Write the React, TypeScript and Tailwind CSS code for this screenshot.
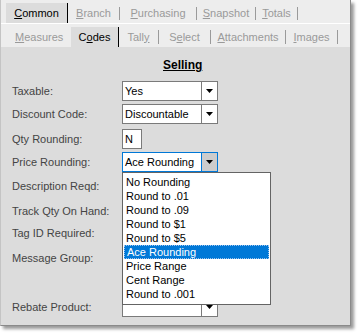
import React from "react";

const Arrow = () => (
  <svg width="7" height="4" viewBox="0 0 7 4">
    <path d="M0 0h7L3.5 4z" fill="#000" />
  </svg>
);

function Combo({ value, focused }: { value: string; focused?: boolean }) {
  return (
    <div
      className={`flex h-[20px] w-[96px] border bg-white ${
        focused ? "border-[#0078d7]" : "border-[#7a7a7a]"
      }`}
    >
      <div className="flex flex-1 items-center pl-[2px] text-black">{value}</div>
      <div
        className={`flex w-[16px] items-center justify-center border-l ${
          focused ? "border-[#0078d7] bg-[#cccccc]" : "border-[#7a7a7a] bg-white"
        }`}
      >
        <Arrow />
      </div>
    </div>
  );
}

function Tab({
  w,
  active,
  children,
  sepH,
}: {
  w: string;
  active?: boolean;
  children: React.ReactNode;
  sepH: string;
}) {
  return (
    <div className={`flex h-full items-stretch ${w} ${active ? "bg-[#dcdcdc]" : ""}`}>
      <div
        className={`flex flex-1 items-center justify-center ${
          active ? "text-black" : "text-[#9a9a9a]"
        }`}
      >
        {children}
      </div>
      {active ? (
        <div className="w-px bg-black" />
      ) : (
        <div className={`w-px self-center bg-[#9a9a9a] ${sepH}`} />
      )}
    </div>
  );
}

function Row({
  label,
  mt,
  children,
}: {
  label: string;
  mt: string;
  children?: React.ReactNode;
}) {
  return (
    <div className={`flex h-[20px] items-center ${mt}`}>
      <div className="w-[110px] text-[#444444]">{label}</div>
      {children}
    </div>
  );
}

const items = [
  "No Rounding",
  "Round to .01",
  "Round to .09",
  "Round to $1",
  "Round to $5",
  "Ace Rounding",
  "Price Range",
  "Cent Range",
  "Round to .001",
];

export default function App() {
  return (
    <div
      className="relative h-[335px] w-[358px] bg-white text-[11px] leading-none"
      style={{ fontFamily: '"Liberation Sans", Arial, sans-serif' }}
    >
      <div className="relative flex h-[326px] w-[351px] flex-col border-b border-l border-r border-b-[#8a8a8a] border-l-[#c4c4c4] border-r-[#8a8a8a] bg-[#dcdcdc] shadow-[3px_3px_3px_rgba(0,0,0,0.4)]">
        {/* Tab row 1 */}
        <div className="flex h-[24px] border-b border-white bg-[#ededed] pl-[5px] pt-[3px]">
          <Tab w="w-[62px]" active sepH="h-[13px]">
            <span>
              <u>C</u>ommon
            </span>
          </Tab>
          <Tab w="w-[52px]" sepH="h-[13px]">
            <span>
              <u>B</u>ranch
            </span>
          </Tab>
          <Tab w="w-[77px]" sepH="h-[13px]">
            <span>
              <u>P</u>urchasing
            </span>
          </Tab>
          <Tab w="w-[59px]" sepH="h-[13px]">
            <span>
              <u>S</u>napshot
            </span>
          </Tab>
          <Tab w="w-[42px]" sepH="h-[13px]">
            <span>
              <u>T</u>otals
            </span>
          </Tab>
        </div>
        {/* Tab row 2 */}
        <div className="flex h-[23px] bg-[#ededed] pl-[5px] pt-[3px]">
          <div className="flex h-full w-[65px] items-center pl-[9px] text-[#9a9a9a]">
            <span>
              <u>M</u>easures
            </span>
          </div>
          <Tab w="w-[48px]" active sepH="h-[14px]">
            <span>
              C<u>o</u>des
            </span>
          </Tab>
          <Tab w="w-[40px]" sepH="h-[14px]">
            <span>
              Tall<u>y</u>
            </span>
          </Tab>
          <Tab w="w-[52px]" sepH="h-[14px]">
            <span>
              S<u>e</u>lect
            </span>
          </Tab>
          <Tab w="w-[75px]" sepH="h-[14px]">
            <span>
              <u>A</u>ttachments
            </span>
          </Tab>
          <Tab w="w-[52px]" sepH="h-[14px]">
            <span>
              <u>I</u>mages
            </span>
          </Tab>
        </div>
        {/* Content */}
        <div className="flex flex-1 flex-col pl-[11px]">
          <div className="mt-[11px] flex h-[14px] items-center pl-[151px] text-[12px] font-bold text-black underline">
            Selling
          </div>
          <Row label="Taxable:" mt="mt-[9px]">
            <Combo value="Yes" />
          </Row>
          <Row label="Discount Code:" mt="mt-[3px]">
            <Combo value="Discountable" />
          </Row>
          <Row label="Qty Rounding:" mt="mt-[5px]">
            <div className="flex h-[20px] w-[20px] items-center border border-[#7a7a7a] bg-white pl-[2px] text-black">
              N
            </div>
          </Row>
          <Row label="Price Rounding:" mt="mt-[3px]">
            <Combo value="Ace Rounding" focused />
          </Row>
          <Row label="Description Reqd:" mt="mt-[4px]" />
          <Row label="Track Qty On Hand:" mt="mt-[5px]" />
          <Row label="Tag ID Required:" mt="mt-[2px]" />
          <Row label="Message Group:" mt="mt-[5px]" />
          <Row label="Rebate Product:" mt="mt-[29px]">
            <Combo value="" />
          </Row>
        </div>

        {/* Dropdown list overlay */}
        <div className="absolute left-[121px] top-[172px] flex h-[133px] w-[149px] flex-col border border-[#646464] bg-white px-[1px] pt-[2px] text-black">
          {items.map((it) => (
            <div
              key={it}
              className={`flex h-[14px] items-center pl-[2px] ${
                it === "Ace Rounding"
                  ? "border border-dotted border-[#9cc3ee] bg-[#0078d7] pl-[1px] text-white"
                  : ""
              }`}
            >
              {it}
            </div>
          ))}
        </div>
      </div>
    </div>
  );
}
